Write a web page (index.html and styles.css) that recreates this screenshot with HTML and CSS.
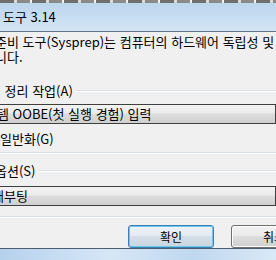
FILE: index.html
```html
<!DOCTYPE html>
<html lang="ko">
<head>
  <meta charset="UTF-8" />
  <title>시스템 준비 도구 3.14</title>
  <link rel="stylesheet" href="styles.css">
</head>
<body>
  <div class="top-strip"></div>

  <!-- Title bar -->
  <div class="titlebar">
    <span class="title">도구 3.14</span>
  </div>

  <main class="content">
    <p class="intro">
      <span class="line">준비 도구(Sysprep)는 컴퓨터의 하드웨어 독립성 및 정리를 위해</span>
      <span class="line">니다.</span>
    </p>

    <!-- Cleanup action -->
    <div class="group-head first-group">
      <span class="group-label cut-a">템 정리 작업(A)</span>
    </div>
    <div class="select first-select">
      <span class="select-text cut-c">템 OOBE(첫 실행 경험) 입력</span>
    </div>
    <div class="check">
      <span class="check-label">일반화(G)</span>
    </div>
    <div class="group-end"></div>

    <!-- Shutdown options -->
    <div class="group-head second-group">
      <span class="group-label cut-d">옵션(S)</span>
    </div>
    <div class="select second-select">
      <span class="select-text cut-b">재부팅</span>
    </div>
    <div class="group-end bottom-end"></div>

    <div class="buttons">
      <button class="btn default">확인</button>
      <button class="btn">취소</button>
    </div>
  </main>

  <div class="frame-bottom"></div>
</body>
</html>
```

FILE: styles.css
```css
html, body {
  margin: 0;
  padding: 0;
  width: 276px;
  height: 260px;
  overflow: hidden;
}

body {
  font-family: "Noto Sans CJK KR", "Noto Sans", sans-serif;
  font-size: 13px;
  color: #000;
  background-color: #f0f0f0;
  white-space: nowrap;
}

.top-strip {
  height: 3px;
  background: repeating-linear-gradient(90deg, #6e6e6e 0 14px, #d8d8d8 14px 17px, #8a8a8a 17px 30px, #f2f2f2 30px 32px);
}

.titlebar {
  height: 28px;
  display: flex;
  align-items: center;
  padding-left: 3px;
  background: linear-gradient(#bcd6ee, #c8def2 55%, #d4e6f5);
  border-bottom: 1px solid #5f7388;
}

.title {
  line-height: 14px;
}

.content {
  display: flex;
  flex-direction: column;
  overflow: hidden;
}

.intro {
  margin: 2px 0 0 0;
  line-height: 15px;
  display: flex;
  flex-direction: column;
}

.line {
  margin-left: -5px;
}

.group-head {
  display: flex;
  align-items: center;
  gap: 3px;
  height: 15px;
  line-height: 15px;
}

.group-head::after {
  content: "";
  flex: 1;
  height: 1px;
  background: #d5dfe5;
  border-bottom: 1px solid #fff;
}

.first-group {
  margin-top: 19px;
}

.second-group {
  margin-top: 9px;
}

.cut-a {
  margin-left: -11px;
}

.cut-c {
  margin-left: -2px;
}

.cut-d {
  margin-left: -5px;
}

.cut-b {
  margin-left: -7px;
}

.select {
  height: 18px;
  border: 1px solid #3f3f3f;
  background: linear-gradient(#f2f2f2, #ebebeb 45%, #dddddd 50%, #cfcfcf);
  display: flex;
  align-items: center;
}

.first-select {
  margin-top: 6px;
  margin-left: -2px;
}

.second-select {
  margin-top: 8px;
  margin-left: -2px;
}

.select-text {
  line-height: 14px;
}

.check {
  height: 15px;
  line-height: 15px;
  margin-top: 7px;
}

.group-end {
  height: 1px;
  margin-top: 6px;
  background: #d5dfe5;
  border-bottom: 1px solid #fff;
}

.bottom-end {
  margin-top: 10px;
}

.buttons {
  display: flex;
  gap: 17px;
  margin-top: 7px;
  padding-left: 128px;
}

.btn {
  flex: none;
  width: 86px;
  height: 23px;
  padding: 0;
  font-family: inherit;
  font-size: 12px;
  color: #000;
  border: 1px solid #707070;
  border-radius: 3px;
  background: linear-gradient(#f2f2f2, #ebebeb 45%, #dddddd 50%, #cfcfcf);
  box-shadow: inset 0 0 0 1px #fcfcfc;
}

.btn.default {
  border-color: #3c7fb1;
  background: linear-gradient(#eef3f7, #e4ebf1 45%, #d5dfe7 50%, #c8d5e0);
  box-shadow: inset 0 0 0 1px #6fc6ee;
}

.frame-bottom {
  position: absolute;
  left: 0;
  top: 248px;
  width: 276px;
  height: 12px;
  border-top: 1px solid #4c5d70;
  background: linear-gradient(90deg, #b6d1ec, #d5e7f7 40%, #c0d8ef 70%, #d9e9f7);
}
```
